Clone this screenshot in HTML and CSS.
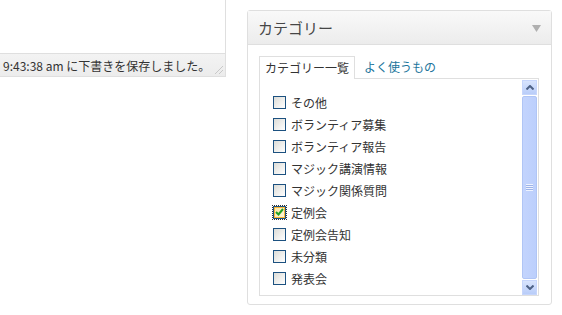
FILE: index.html
```html
<!DOCTYPE html>
<html lang="ja">
<head>
<meta charset="utf-8">
<link rel="stylesheet" href="styles.css">
</head>
<body>
<div class="page">
  <div class="editor">
    <div class="editor-area"></div>
    <div class="status">
      <span class="status-text">9:43:38 am に下書きを保存しました。</span>
      <svg class="grip" width="12" height="12" viewBox="0 0 12 12"><path d="M11 3L3 11M11 7L7 11M11 11L11 11" stroke="#c8c8c8" stroke-width="1"/></svg>
    </div>
  </div>
  <div class="postbox">
    <div class="postbox-head">
      <h3 class="postbox-title">カテゴリー</h3>
      <svg class="toggle" width="9" height="7" viewBox="0 0 9 7"><path d="M0 0H9L4.5 7Z" fill="#b0b0b0"/></svg>
    </div>
    <div class="postbox-body">
      <div class="tabs">
        <span class="tab active">カテゴリー一覧</span>
        <span class="tab link">よく使うもの</span>
      </div>
      <div class="checklist">
        <ul class="items">
          <li class="item"><span class="cb"></span>その他</li>
          <li class="item"><span class="cb"></span>ボランティア募集</li>
          <li class="item"><span class="cb"></span>ボランティア報告</li>
          <li class="item"><span class="cb"></span>マジック講演情報</li>
          <li class="item"><span class="cb"></span>マジック関係質問</li>
          <li class="item"><span class="cb checked"><svg width="9" height="8" viewBox="0 0 9 8"><path d="M1 4L3.5 6.5L8 1" stroke="#21a121" stroke-width="2" fill="none"/></svg></span>定例会</li>
          <li class="item"><span class="cb"></span>定例会告知</li>
          <li class="item"><span class="cb"></span>未分類</li>
          <li class="item"><span class="cb"></span>発表会</li>
        </ul>
        <div class="scrollbar">
          <div class="sb-btn"><svg width="8" height="5" viewBox="0 0 8 5"><path d="M0.5 4.5L4 1L7.5 4.5" stroke="#4d6185" stroke-width="2" fill="none"/></svg></div>
          <div class="sb-thumb"><span class="grip-lines"></span></div>
          <div class="sb-btn"><svg width="8" height="5" viewBox="0 0 8 5"><path d="M0.5 0.5L4 4L7.5 0.5" stroke="#4d6185" stroke-width="2" fill="none"/></svg></div>
        </div>
      </div>
    </div>
  </div>
</div>
</body>
</html>
```
FILE: styles.css
```css
html, body {
  margin: 0;
  padding: 0;
  background: #fff;
}
body {
  font-family: "Noto Sans CJK JP", "DejaVu Sans", sans-serif;
  font-size: 12px;
  color: #333;
}
.page {
  display: flex;
  align-items: flex-start;
  width: 562px;
  height: 315px;
  overflow: hidden;
}
.editor {
  width: 226px;
  flex: none;
}
.editor-area {
  height: 53px;
  border-right: 1px solid #dfdfdf;
  background: #fff;
}
.status {
  height: 22px;
  border: 1px solid #dfdfdf;
  border-left: none;
  background: linear-gradient(#f3f3f3, #ececec);
  display: flex;
  align-items: center;
  justify-content: space-between;
  padding-left: 3px;
}
.status-text {
  font-size: 12px;
  color: #333;
  white-space: nowrap;
}
.grip {
  align-self: flex-end;
  margin: 0 1px 1px 0;
}
.postbox {
  margin-left: 21px;
  margin-top: 10px;
  width: 303px;
  height: 293px;
  border: 1px solid #dfdfdf;
  border-radius: 3px;
  background: #fff;
  display: flex;
  flex-direction: column;
}
.postbox-head {
  height: 33px;
  border-bottom: 1px solid #dfdfdf;
  background: linear-gradient(#f9f9f9, #ececec);
  display: flex;
  align-items: center;
  justify-content: space-between;
  padding: 0 10px 0 10px;
}
.postbox-title {
  margin: 0;
  font-size: 15px;
  font-weight: normal;
  color: #464646;
}
.toggle {
  margin-top: 2px;
}
.postbox-body {
  padding: 10px 12px 0 11px;
}
.tabs {
  display: flex;
  align-items: flex-end;
  height: 23px;
}
.tab {
  height: 22px;
  line-height: 22px;
  padding: 0 5px;
  font-size: 12px;
  white-space: nowrap;
}
.tab.active {
  border: 1px solid #dfdfdf;
  border-bottom: none;
  background: #fff;
  color: #333;
  position: relative;
  top: 1px;
}
.tab.link {
  color: #21759b;
  margin-left: 4px;
}
.checklist {
  height: 216px;
  border: 1px solid #dfdfdf;
  background: #fff;
  display: flex;
}
.items {
  list-style: none;
  margin: 0;
  padding: 13px 0 0 13px;
  flex: 1;
}
.item {
  height: 21.9px;
  display: flex;
  align-items: center;
  font-size: 12px;
  color: #333;
}
.cb {
  width: 11px;
  height: 11px;
  border: 1px solid #1c5180;
  background: linear-gradient(135deg, #dcdcd7, #fff);
  margin-right: 5px;
  flex: none;
  display: flex;
  align-items: center;
  justify-content: center;
}
.cb.checked {
  background: linear-gradient(135deg, #fbe6a2, #fdf6dc);
  box-shadow: inset 0 0 0 1px #f8b636;
  outline: 1px dotted #333;
  outline-offset: 0;
}
.scrollbar {
  width: 15px;
  margin: 1px 1px 0 0;
  display: flex;
  flex-direction: column;
}
.sb-btn {
  height: 15px;
  background: linear-gradient(#d8e4fd, #b9cdf9);
  border: 1px solid #c6d5fb;
  box-sizing: border-box;
  display: flex;
  align-items: center;
  justify-content: center;
}
.sb-thumb {
  flex: 1;
  margin: 1px 0;
  background: linear-gradient(90deg, #c3d4fd, #bccffc);
  border: 1px solid #b0c5f5;
  border-radius: 2px;
  display: flex;
  align-items: center;
  justify-content: center;
}
.grip-lines {
  width: 7px;
  height: 7px;
  background: repeating-linear-gradient(#eef3ff 0 1px, #9db3e8 1px 2px);
}
```
